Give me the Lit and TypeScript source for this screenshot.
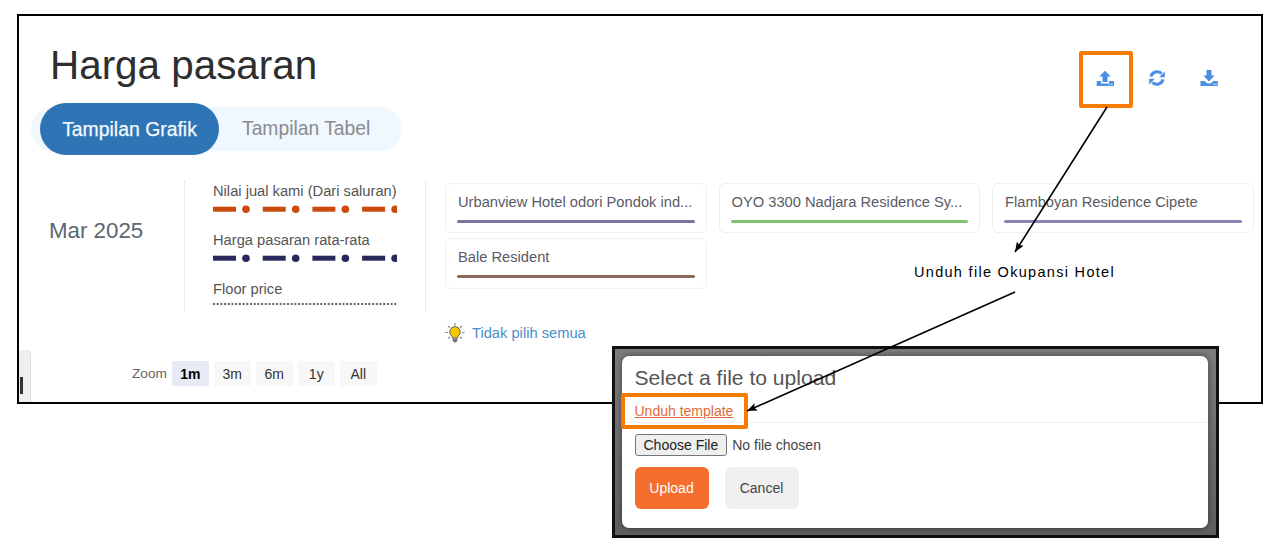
import { LitElement, html, svg, css } from "lit";
import { customElement, state } from "lit/decorators.js";

const hotels = [
  { name: "Urbanview Hotel odori Pondok ind...", color: "#7a74a4" },
  { name: "OYO 3300 Nadjara Residence Sy...", color: "#85c26f" },
  { name: "Flamboyan Residence Cipete", color: "#8f82b5" },
  { name: "Bale Resident", color: "#8e6a5c" },
];

const dashDot = (color: string) => svg`
  <svg class="line" width="184" height="8" viewBox="0 0 184 8">
    ${[0, 49.7, 99.4, 149.1].map(
      (x) => svg`
        <rect x=${x} y="1.7" width="23" height="5" fill=${color}></rect>
        <circle cx=${x + 33} cy="4.2" r="3.8" fill=${color}></circle>
      `
    )}
  </svg>
`;

@customElement("app-root")
export class AppRoot extends LitElement {
  static styles = css`
    :host {
      display: block;
      position: relative;
      box-sizing: border-box;
      width: 1279px;
      height: 552px;
      padding: 14px 0 0 17px;
      background: #fff;
      font-family: "Liberation Sans", Arial, sans-serif;
      color: #555;
      overflow: hidden;
    }
    .frame {
      position: relative;
      box-sizing: border-box;
      width: 1246px;
      height: 390px;
      border: 2px solid #000;
      padding: 26px 0 0 12px;
      overflow: hidden;
    }
    .header {
      display: flex;
      justify-content: space-between;
      height: 46px;
    }
    h1 {
      margin: 0 0 0 19px;
      font-size: 40.4px;
      line-height: 46px;
      font-weight: 400;
      color: #2e2e2e;
    }
    .actions {
      display: flex;
      height: 20px;
      margin-top: 26px;
      padding-right: 26px;
    }
    .actions span {
      display: flex;
      justify-content: center;
      width: 52px;
    }
    .toggle {
      display: flex;
      align-items: center;
      width: 371px;
      height: 44px;
      margin-top: 19px;
      border-radius: 22px;
      background: #eff7ff;
      font-size: 19.3px;
      color: #8a8a8a;
    }
    .toggle .active {
      display: flex;
      align-items: center;
      justify-content: center;
      flex: none;
      width: 179px;
      height: 52px;
      margin-left: 9px;
      border-radius: 26px;
      background: #2f75b5;
      color: #f4f9ff;
      font-size: 19.4px;
      -webkit-text-stroke: 0.25px #f4f9ff;
    }
    .toggle .other {
      margin-left: 23px;
    }
    .main {
      display: flex;
      height: 130px;
      margin-top: 30px;
      font-size: 14.7px;
    }
    .date {
      box-sizing: border-box;
      width: 153px;
      padding: 37px 0 0 18px;
      font-size: 22.3px;
      line-height: 26px;
      color: #5c6670;
    }
    .legend {
      box-sizing: border-box;
      width: 242px;
      padding: 1px 0 0 28px;
      border-left: 1px dotted #dcdcdc;
      border-right: 1px dotted #dcdcdc;
    }
    .legend-item {
      height: 49px;
    }
    .legend-item div {
      line-height: 18px;
      white-space: nowrap;
    }
    .line {
      display: block;
      margin-top: 5px;
    }
    .line.dotted {
      margin-top: 2px;
    }
    .cards {
      display: grid;
      grid-template-columns: repeat(3, 261.5px);
      grid-auto-rows: 50.3px;
      gap: 5px 12px;
      padding: 2px 0 0 19px;
    }
    .card {
      box-sizing: border-box;
      padding: 8px 11px 0;
      border: 1px solid #f0f0f0;
      border-radius: 6px;
      background: #fff;
    }
    .card span {
      display: block;
      padding-left: 1px;
      line-height: 20px;
      white-space: nowrap;
      color: #5a5a66;
    }
    .card i {
      display: block;
      height: 3px;
      margin-top: 8px;
      border-radius: 2px;
    }
    .select-all {
      display: flex;
      align-items: center;
      gap: 7px;
      height: 20px;
      margin: 12px 0 0 414px;
      font-size: 14.7px;
      color: #4a8fc9;
    }
    .zoom {
      display: flex;
      align-items: center;
      height: 25px;
      margin: 18px 0 0 101px;
      font-size: 14px;
      color: #333;
    }
    .zoom label {
      width: 40px;
      font-size: 13.7px;
      color: #666;
    }
    .zoom button {
      width: 36.5px;
      height: 25px;
      margin-right: 5.5px;
      padding: 0;
      border: 0;
      border-radius: 2px;
      background: #f7f7f7;
      font: inherit;
      color: #333;
    }
    .zoom button.on {
      background: #e6ebf5;
      font-weight: 700;
      color: #000;
    }
    .drawer {
      position: absolute;
      left: 0;
      bottom: 0;
      width: 11px;
      height: 52px;
      border-right: 1px solid #ddd;
      border-top-right-radius: 4px;
      background: #efefef;
    }
    .drawer::after {
      content: "";
      position: absolute;
      left: 1px;
      top: 27px;
      width: 3px;
      height: 17px;
      background: #333;
    }
    .dialog {
      position: absolute;
      left: 612px;
      top: 346px;
      box-sizing: border-box;
      width: 607px;
      height: 192px;
      padding: 7px 8px 7px 7px;
      border: 3px solid #111;
      background: linear-gradient(#7c7c7c, #5f5f5f);
    }
    .panel {
      height: 100%;
      border-radius: 7px;
      background: #fff;
      box-shadow: 0 0 6px rgba(0, 0, 0, 0.45);
    }
    .panel h2 {
      margin: 0;
      padding: 11px 0 0 12.5px;
      font-size: 21.1px;
      line-height: 22px;
      font-weight: 400;
      color: #555;
    }
    .panel a {
      display: block;
      margin: 13px 0 0 12.5px;
      font-size: 14px;
      line-height: 18px;
      color: #e2693a;
      text-decoration: underline;
    }
    .panel hr {
      height: 1px;
      margin: 2px 2px 0 0;
      border: 0;
      background: #eee;
    }
    .panel input {
      display: block;
      height: 22px;
      margin: 11px 0 0 12.5px;
      font: 14px "Liberation Sans", Arial, sans-serif;
      color: #444;
    }
    .panel input::file-selector-button {
      height: 22px;
      margin-right: 5px;
      padding: 0 8px;
      border: 1px solid #767676;
      border-radius: 3px;
      background: #efefef;
      color: #222;
    }
    .buttons {
      display: flex;
      gap: 16px;
      margin: 11px 0 0 12.5px;
    }
    .buttons button {
      width: 74px;
      height: 42px;
      padding: 0;
      border: 0;
      border-radius: 6px;
      background: #f0f0f0;
      font: 14px "Liberation Sans", Arial, sans-serif;
      color: #444;
    }
    .buttons button.primary {
      background: #f56e2d;
      color: #fff;
    }
    .highlight {
      position: absolute;
      box-sizing: border-box;
      border: 4px solid #f57c00;
      border-radius: 2px;
    }
    .highlight.upload {
      left: 1079px;
      top: 51px;
      width: 54px;
      height: 57px;
    }
    .highlight.template {
      left: 621px;
      top: 393px;
      width: 127px;
      height: 36px;
    }
    .note {
      position: absolute;
      left: 914px;
      top: 263px;
      font-size: 14.5px;
      line-height: 18px;
      letter-spacing: 1.3px;
      color: #000;
      white-space: nowrap;
    }
    .arrows {
      position: absolute;
      left: 0;
      top: 0;
    }
  `;

  @state() ranges = ["1m", "3m", "6m", "1y", "All"];

  render() {
    return html`
      <div class="frame">
        <div class="header">
          <h1>Harga pasaran</h1>
          <div class="actions">
            <span>
              <svg width="20" height="20" viewBox="0 0 20 20" fill="#4a8fe2">
                <path d="M10 2.7 15.7 8.5H12.5V14H7.5V8.5H4.3Z"></path>
                <path d="M1.7 13H6V15.5H14V13H19V18H1.7Z"></path>
                <path d="M14 15.8h1.4v1H14zM16.2 15.8h1.4v1h-1.4z" fill="#fff"></path>
              </svg>
            </span>
            <span>
              <svg width="20" height="20" viewBox="0 0 20 20" fill="#4a8fe2">
                <path d="M3.9 8.6A6.4 6.4 0 0 1 14.6 5.6" fill="none" stroke="#4a8fe2" stroke-width="3"></path>
                <path d="M17.8 3.6V9.2H12.2Z"></path>
                <path d="M16.1 11.4A6.4 6.4 0 0 1 5.4 14.4" fill="none" stroke="#4a8fe2" stroke-width="3"></path>
                <path d="M2.2 16.4V10.8H7.8Z"></path>
              </svg>
            </span>
            <span>
              <svg width="20" height="20" viewBox="0 0 20 20" fill="#4a8fe2">
                <path d="M7.5 2H12.5V7.5H15.7L10 13.6 4.3 7.5H7.5Z"></path>
                <path d="M1.5 13H5.5L8.5 15.5H11.5L14.5 13H18.8V18H1.5Z"></path>
                <path d="M14 15.8h1.4v1H14zM16.2 15.8h1.4v1h-1.4z" fill="#fff"></path>
              </svg>
            </span>
          </div>
        </div>

        <div class="toggle">
          <div class="active">Tampilan Grafik</div>
          <div class="other">Tampilan Tabel</div>
        </div>

        <div class="main">
          <div class="date">Mar 2025</div>
          <div class="legend">
            <div class="legend-item">
              <div>Nilai jual kami (Dari saluran)</div>
              ${dashDot("#cc4b0c")}
            </div>
            <div class="legend-item">
              <div>Harga pasaran rata-rata</div>
              ${dashDot("#29285c")}
            </div>
            <div class="legend-item">
              <div>Floor price</div>
              <svg class="line dotted" width="184" height="8" viewBox="0 0 184 8">
                <line x1="0" y1="4" x2="184" y2="4" stroke="#666" stroke-width="2" stroke-dasharray="2 1.7"></line>
              </svg>
            </div>
          </div>
          <div class="cards">
            ${hotels.map(
              (h) => html`
                <div class="card">
                  <span>${h.name}</span>
                  <i style="background:${h.color}"></i>
                </div>
              `
            )}
          </div>
        </div>

        <div class="select-all">
          <svg width="20" height="20" viewBox="0 0 20 20">
            <g stroke="#8a8a8a" stroke-width="1.2" stroke-linecap="round">
              <path d="M10 .5V2.2M3.3 3.2 4.5 4.4M16.7 3.2 15.5 4.4M.8 9.5H2.5M17.5 9.5H19.2M3.4 15.3 4.6 14.1M16.6 15.3 15.4 14.1"></path>
            </g>
            <path d="M10 3.6A5.3 5.3 0 0 0 7.2 13.4V15H12.8V13.4A5.3 5.3 0 0 0 10 3.6Z" fill="#f5c800" stroke="#666" stroke-width="1"></path>
            <path d="M7.6 15.6H12.4V17.6L11 19.4H9L7.6 17.6Z" fill="#777"></path>
          </svg>
          Tidak pilih semua
        </div>

        <div class="zoom">
          <label>Zoom</label>
          ${this.ranges.map(
            (r, i) => html`<button class=${i === 0 ? "on" : ""}>${r}</button>`
          )}
        </div>

        <div class="drawer"></div>
      </div>

      <div class="dialog">
        <div class="panel">
          <h2>Select a file to upload</h2>
          <a href="#">Unduh template</a>
          <hr />
          <input type="file" />
          <div class="buttons">
            <button class="primary">Upload</button>
            <button>Cancel</button>
          </div>
        </div>
      </div>

      <div class="highlight upload"></div>
      <div class="highlight template"></div>
      <div class="note">Unduh file Okupansi Hotel</div>

      <svg class="arrows" width="1279" height="552" viewBox="0 0 1279 552" fill="none">
        <defs>
          <marker id="head" markerWidth="12" markerHeight="10" refX="10" refY="4" orient="auto" markerUnits="userSpaceOnUse">
            <path d="M0 0 10 4 0 8 2 4Z" fill="#000"></path>
          </marker>
        </defs>
        <line x1="1107" y1="107" x2="1015" y2="252" stroke="#000" stroke-width="1.6" marker-end="url(#head)"></line>
        <line x1="1015" y1="292" x2="747" y2="411" stroke="#000" stroke-width="1.6" marker-end="url(#head)"></line>
      </svg>
    `;
  }
}
